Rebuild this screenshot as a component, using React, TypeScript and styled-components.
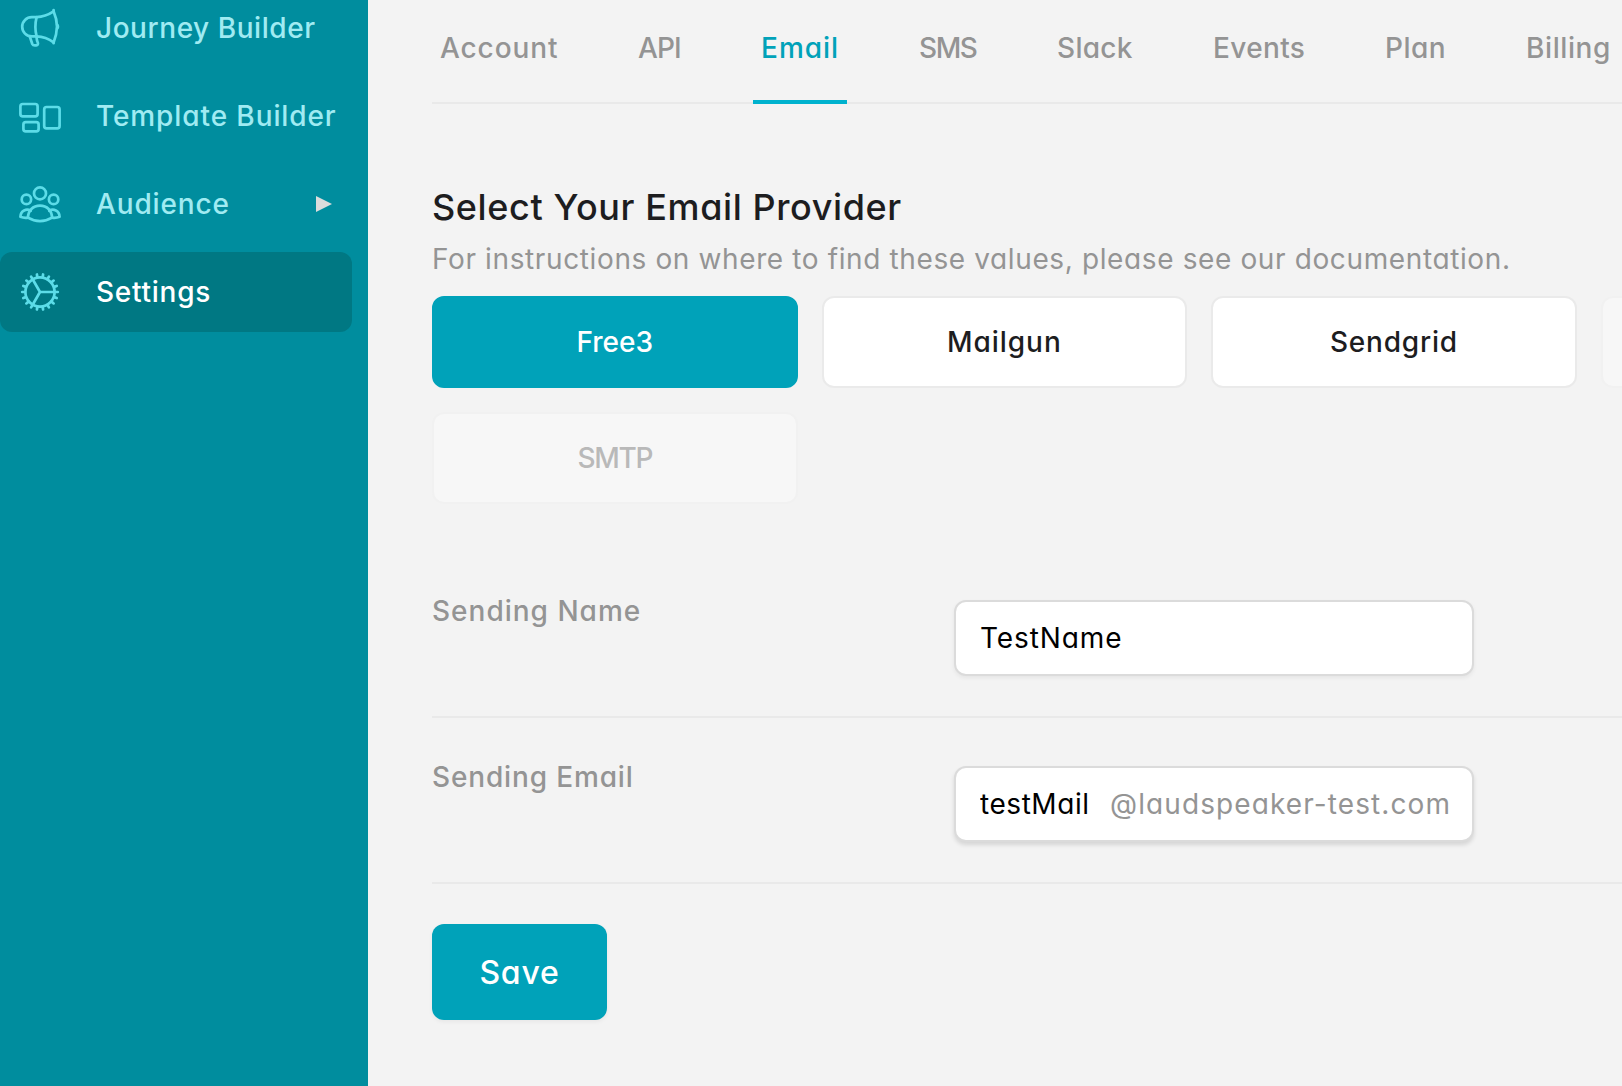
import React, { useState } from "react";
import styled, { createGlobalStyle } from "styled-components";

const color = {
  page: "#f3f3f3",
  sidebar: "#008d9e",
  sidebarActive: "#007883",
  sidebarIcon: "#5cdce8",
  sidebarText: "#a0ebf2",
  accent: "#00a2b9",
  accentLine: "#00b2ce",
  ink: "#1d1d1f",
  muted: "#949494",
  line: "#e9e9e9",
  fieldLine: "#dbdbdb",
};

const GlobalStyle = createGlobalStyle`
  *, *::before, *::after { box-sizing: border-box; }
  body {
    margin: 0;
    background: ${color.page};
    overflow: hidden;
    font-family: Inter, "Liberation Sans", sans-serif;
    font-feature-settings: "cv11";
    -webkit-font-smoothing: antialiased;
  }
  button, input { font: inherit; font-feature-settings: inherit; }
`;

const Text = styled.span<{ $track?: number }>`
  letter-spacing: ${(p) => p.$track ?? 0}px;
  white-space: nowrap;
`;

const Shell = styled.div`
  display: flex;
  width: 100vw;
  height: 100vh;
  overflow: hidden;
`;

const Sidebar = styled.nav`
  flex: none;
  display: flex;
  flex-direction: column;
  gap: 8px;
  width: 368px;
  margin-top: -12px;
  padding-right: 16px;
  background: ${color.sidebar};
`;

const NavItem = styled.a<{ $active?: boolean }>`
  display: flex;
  align-items: center;
  height: 80px;
  padding: 0 20px 0 16px;
  border-radius: 12px;
  background: ${(p) => (p.$active ? color.sidebarActive : "transparent")};
  color: ${(p) => (p.$active ? "#fff" : color.sidebarText)};
  font-size: 28px;
  font-weight: 500;
  line-height: 40px;

  svg { flex: none; }
`;

const NavIcon = styled.svg`
  width: 48px;
  height: 48px;
  margin-right: 32px;
  fill: none;
  stroke: ${color.sidebarIcon};
  stroke-width: 2.7;
  stroke-linecap: round;
  stroke-linejoin: round;
`;

const NavLabel = styled(Text)`
  flex: 1;
  padding-bottom: 1px;
`;

const Caret = styled.svg`
  width: 16px;
  height: 16px;
  fill: #dcdcdc;
`;

const Main = styled.main`
  flex: 1;
  min-width: 0;
  padding-left: 64px;
  overflow: hidden;
`;

const Content = styled.div`
  width: 1536px;
`;

const Tabs = styled.div`
  display: flex;
  gap: 64px;
  height: 104px;
  border-bottom: 2px solid ${color.line};
`;

const Tab = styled.a<{ $width: number; $active?: boolean }>`
  flex: none;
  width: ${(p) => p.$width}px;
  height: 104px;
  padding: 27px 0 0 8px;
  border-bottom: 4px solid ${(p) => (p.$active ? color.accentLine : "transparent")};
  color: ${(p) => (p.$active ? color.accent : color.muted)};
  font-size: 28px;
  font-weight: 500;
  line-height: 42px;
`;

const Heading = styled.h1`
  margin: 79px 0 0;
  color: ${color.ink};
  font-size: 36px;
  font-weight: 500;
  line-height: 48px;
`;

const Hint = styled.p`
  margin: 7px 0 0;
  color: ${color.muted};
  font-size: 28px;
  line-height: 42px;
`;

const Providers = styled.div`
  display: grid;
  grid-template-columns: repeat(4, 365.6px);
  gap: 24px;
  margin-top: 16px;
`;

const Provider = styled.button<{ $active?: boolean }>`
  height: 92px;
  padding: 0 0 1px;
  border: 2px solid ${(p) => (p.$active ? color.accent : "#eaeaea")};
  border-radius: 12px;
  background: ${(p) => (p.$active ? color.accent : "#fff")};
  color: ${(p) => (p.$active ? "#fff" : color.ink)};
  font-size: 28px;
  font-weight: 500;

  &:disabled {
    border-color: #f1f1f1;
    background: #f7f7f7;
    color: #b9b9b9;
  }
`;

const Form = styled.form`
  margin-top: 56px;
`;

const Field = styled.div`
  display: grid;
  grid-template-columns: 522px 520px;
  align-items: start;
  height: 166px;
  padding-top: 48px;
  border-bottom: 2px solid ${color.line};

  &:first-child {
    height: 158px;
    padding-top: 40px;
  }
`;

const FieldLabel = styled.label`
  margin-top: -10px;
  color: ${color.muted};
  font-size: 28px;
  font-weight: 500;
  line-height: 42px;
`;

const InputBox = styled.div<{ $raised?: boolean }>`
  display: flex;
  align-items: center;
  height: 76px;
  padding: 0 22px 1px 24px;
  border: 2px solid ${color.fieldLine};
  border-radius: 12px;
  background: #fff;
  box-shadow: 0 ${(p) => (p.$raised ? 3 : 2)}px 4px rgba(0, 0, 0, ${(p) => (p.$raised ? 0.12 : 0.06)});
  font-size: 28px;
`;

const Input = styled.input<{ $track: number; $width?: number }>`
  width: ${(p) => (p.$width ? `${p.$width}px` : "100%")};
  flex: none;
  height: 42px;
  padding: 0;
  border: 0;
  outline: 0;
  background: none;
  color: #000;
  letter-spacing: ${(p) => p.$track}px;
`;

const Suffix = styled(Text)`
  color: ${color.muted};
`;

const Save = styled.button`
  width: 175px;
  height: 96px;
  margin-top: 40px;
  padding: 0;
  border: 0;
  border-radius: 12px;
  background: ${color.accent};
  box-shadow: 0 2px 4px rgba(0, 0, 0, 0.05);
  color: #fff;
  font-size: 32px;
  font-weight: 500;
`;

function MegaphoneIcon() {
  return (
    <NavIcon viewBox="0 0 48 48">
      <path d="M20.5 13.2H15.8a9.6 9.6 0 0 0 0 19.2H20.5C26.5 32.6 32.5 34.6 37.6 38.4C39.6 33.4 40.9 28.4 41 22.6C40.9 17 39.6 12 37.6 7.4C32.5 10.8 26.5 13 20.5 13.2Z" />
      <path d="M20.6 13.2C19.1 19.2 19.1 26.4 20.6 32.4M37.6 6V7.4M37.6 38.4V39.2M41.2 20.8C42.2 21.8 42.2 23.6 41.2 24.6" />
      <path d="M13.8 32.6 16.2 39.8Q17 41.4 18.8 41.4H20Q22.6 40.8 21.8 38.6C20.6 36.6 20.8 35 20.6 32.8" />
    </NavIcon>
  );
}

function TemplateIcon() {
  return (
    <NavIcon viewBox="0 0 48 48">
      <rect x="4.4" y="12" width="17.2" height="12.4" rx="2.4" />
      <rect x="7.4" y="30.2" width="15.2" height="9.2" rx="2.4" />
      <rect x="28.2" y="15" width="15.4" height="21.4" rx="2.4" />
    </NavIcon>
  );
}

function AudienceIcon() {
  return (
    <NavIcon viewBox="0 0 48 48">
      <circle cx="24" cy="13.4" r="6" />
      <circle cx="10.4" cy="19.4" r="4.7" />
      <circle cx="37.6" cy="19.4" r="4.7" />
      <path d="M12 37.6C12 30.6 17 25.6 24 25.6S36 30.6 36 37.6C28.6 42.2 19.4 42.2 12 37.6Z" />
      <path d="M14.8 30.8C10.6 28.2 4.6 30.6 4.4 36.8Q8 38.2 12 37.6M33.2 30.8C37.4 28.2 43.4 30.6 43.6 36.8Q40 38.2 36 37.6" />
    </NavIcon>
  );
}

const TEETH = Array.from({ length: 18 }, (_, i) => i * 20);

function GearIcon() {
  return (
    <NavIcon viewBox="0 0 48 48">
      <circle cx="24" cy="24" r="14.6" />
      <path d="M24 24H38.4M24 24 16.8 11.5M24 24 16.8 36.5" />
      {TEETH.map((a) => (
        <path key={a} d="M39 24H41.8" transform={`rotate(${a} 24 24)`} />
      ))}
    </NavIcon>
  );
}

const NAV = [
  { label: "Journey Builder", track: 0.55, Icon: MegaphoneIcon },
  { label: "Template Builder", track: 0.9, Icon: TemplateIcon },
  { label: "Audience", track: 0.85, Icon: AudienceIcon, expandable: true },
  { label: "Settings", track: 0.75, Icon: GearIcon, active: true },
];

const TABS = [
  { label: "Account", width: 134, track: 0.9 },
  { label: "API", width: 59, track: -0.9 },
  { label: "Email", width: 94, track: 1 },
  { label: "SMS", width: 74, track: -1.4 },
  { label: "Slack", width: 92, track: 0.3 },
  { label: "Events", width: 108, track: 0.35 },
  { label: "Plan", width: 77, track: 0.5 },
  { label: "Billing", width: 101, track: 0.6 },
];

const PROVIDERS = [
  { label: "Free3", track: 0 },
  { label: "Mailgun", track: 0.95 },
  { label: "Sendgrid", track: 0.8 },
  { label: "", track: 0, disabled: true },
  { label: "SMTP", track: -1.3, disabled: true },
];

export default function App() {
  const [name, setName] = useState("TestName");
  const [mail, setMail] = useState("testMail");
  const [provider, setProvider] = useState("Free3");

  return (
    <Shell>
      <GlobalStyle />
      <Sidebar>
        {NAV.map(({ label, track, Icon, active, expandable }) => (
          <NavItem key={label} $active={active}>
            <Icon />
            <NavLabel $track={track}>{label}</NavLabel>
            {expandable && (
              <Caret viewBox="0 0 16 16">
                <path d="M0 0 16 8 0 16Z" />
              </Caret>
            )}
          </NavItem>
        ))}
      </Sidebar>
      <Main>
        <Content>
          <Tabs>
            {TABS.map((t) => (
              <Tab key={t.label} $width={t.width} $active={t.label === "Email"}>
                <Text $track={t.track}>{t.label}</Text>
              </Tab>
            ))}
          </Tabs>
          <Heading>
            <Text $track={0.6}>Select Your Email Provider</Text>
          </Heading>
          <Hint>
            <Text $track={0.62}>
              For instructions on where to find these values, please see our documentation.
            </Text>
          </Hint>
          <Providers>
            {PROVIDERS.map((p) => (
              <Provider
                key={p.label}
                type="button"
                disabled={p.disabled}
                $active={p.label === provider}
                onClick={() => setProvider(p.label)}
              >
                <Text $track={p.track}>{p.label}</Text>
              </Provider>
            ))}
          </Providers>
          <Form onSubmit={(e) => e.preventDefault()}>
            <Field>
              <FieldLabel htmlFor="name">
                <Text $track={1}>Sending Name</Text>
              </FieldLabel>
              <InputBox>
                <Input id="name" $track={0.9} value={name} onChange={(e) => setName(e.target.value)} />
              </InputBox>
            </Field>
            <Field>
              <FieldLabel htmlFor="mail">
                <Text $track={0.85}>Sending Email</Text>
              </FieldLabel>
              <InputBox $raised>
                <Input
                  id="mail"
                  $track={0.55}
                  $width={130}
                  value={mail}
                  onChange={(e) => setMail(e.target.value)}
                />
                <Suffix $track={1.1}>@laudspeaker-test.com</Suffix>
              </InputBox>
            </Field>
            <Save type="submit">
              <Text $track={0.8}>Save</Text>
            </Save>
          </Form>
        </Content>
      </Main>
    </Shell>
  );
}
